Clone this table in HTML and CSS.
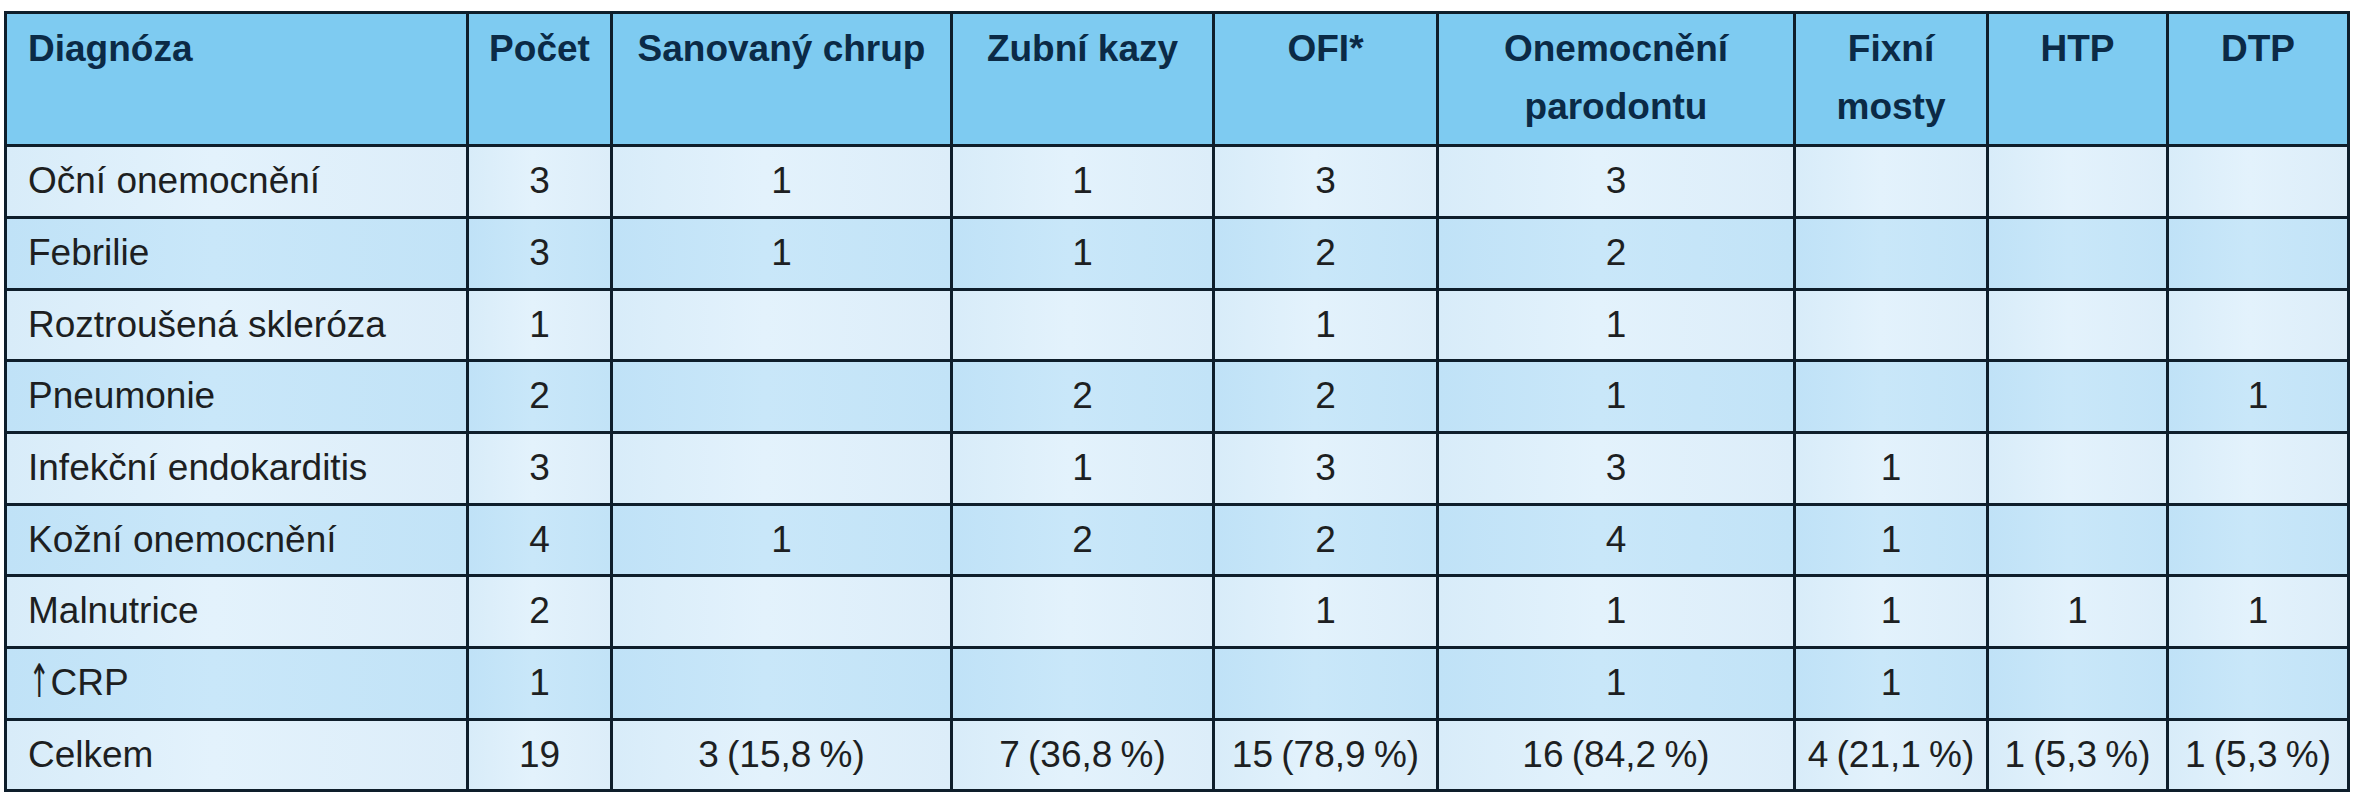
FILE: index.html
```html
<!DOCTYPE html>
<html lang="cs">
<head>
<meta charset="utf-8">
<title>Diagnózy a stav chrupu</title>
<link rel="stylesheet" href="styles.css">
</head>
<body>
<table class="dx">
  <thead>
    <tr>
      <th class="first">Diagnóza</th>
      <th>Počet</th>
      <th>Sanovaný chrup</th>
      <th>Zubní kazy</th>
      <th>OFI*</th>
      <th>Onemocnění<br>parodontu</th>
      <th>Fixní<br>mosty</th>
      <th>HTP</th>
      <th>DTP</th>
    </tr>
  </thead>
  <tbody>
    <tr>
      <td class="first">Oční onemocnění</td><td>3</td><td>1</td><td>1</td><td>3</td><td>3</td><td></td><td></td><td></td>
    </tr>
    <tr>
      <td class="first">Febrilie</td><td>3</td><td>1</td><td>1</td><td>2</td><td>2</td><td></td><td></td><td></td>
    </tr>
    <tr>
      <td class="first">Roztroušená skleróza</td><td>1</td><td></td><td></td><td>1</td><td>1</td><td></td><td></td><td></td>
    </tr>
    <tr>
      <td class="first">Pneumonie</td><td>2</td><td></td><td>2</td><td>2</td><td>1</td><td></td><td></td><td>1</td>
    </tr>
    <tr>
      <td class="first">Infekční endokarditis</td><td>3</td><td></td><td>1</td><td>3</td><td>3</td><td>1</td><td></td><td></td>
    </tr>
    <tr>
      <td class="first">Kožní onemocnění</td><td>4</td><td>1</td><td>2</td><td>2</td><td>4</td><td>1</td><td></td><td></td>
    </tr>
    <tr>
      <td class="first">Malnutrice</td><td>2</td><td></td><td></td><td>1</td><td>1</td><td>1</td><td>1</td><td>1</td>
    </tr>
    <tr>
      <td class="first"><span class="arrow">↑</span>CRP</td><td>1</td><td></td><td></td><td></td><td>1</td><td>1</td><td></td><td></td>
    </tr>
    <tr class="total">
      <td class="first">Celkem</td><td>19</td><td>3 (15,8 %)</td><td>7 (36,8 %)</td><td>15 (78,9 %)</td><td>16 (84,2 %)</td><td>4 (21,1 %)</td><td>1 (5,3 %)</td><td>1 (5,3 %)</td>
    </tr>
  </tbody>
</table>
</body>
</html>
```

FILE: styles.css
```css
html, body {
  margin: 0;
  padding: 0;
  background: #ffffff;
}

body {
  padding: 11px 0 0 4px;
  font-family: "Liberation Sans", Arial, sans-serif;
}

.dx {
  display: grid;
  grid-template-columns: 462px 144px 340px 262px 224px 357px 193px 180px 181px;
  grid-template-rows: 133px 72px 72px 71px 72px 72px 71px 72px 72px 71px;
  width: max-content;
  border-left: 3px solid #0e1e2b;
  border-top: 3px solid #0e1e2b;
  border-collapse: separate;
  border-spacing: 0;
}

.dx thead,
.dx tbody,
.dx tr {
  display: contents;
}

.dx th,
.dx td {
  box-sizing: border-box;
  border-right: 3px solid #0e1e2b;
  border-bottom: 3px solid #0e1e2b;
  margin: 0;
}

.dx th {
  display: block;
  background: #7ecbf1;
  color: #0b2a46;
  font-weight: bold;
  font-size: 37px;
  line-height: 58px;
  text-align: center;
  padding: 6px 6px 0;
}

.dx th.first {
  text-align: left;
  padding-left: 21px;
}

.dx td {
  display: flex;
  align-items: center;
  justify-content: center;
  font-size: 37px;
  line-height: 1;
  color: #1d1f22;
  padding: 0 4px 2px;
  white-space: nowrap;
  word-spacing: -2px;
  background: linear-gradient(90deg, #d8ecf9 0%, #e3f2fc 45%, #dcedf9 100%);
}

.dx tbody tr:nth-child(even) td {
  background: linear-gradient(90deg, #c0e2f7 0%, #c9e7f9 45%, #c2e3f7 100%);
}

.dx td.first {
  justify-content: flex-start;
  padding-left: 21px;
  word-spacing: 0;
}

.arrow {
  font-family: "DejaVu Sans", "Liberation Sans", sans-serif;
  font-size: 46px;
  font-weight: normal;
  line-height: 1;
  display: inline-block;
  transform: scaleX(0.55);
  margin: -4px -8px 0 -8px;
}
```
